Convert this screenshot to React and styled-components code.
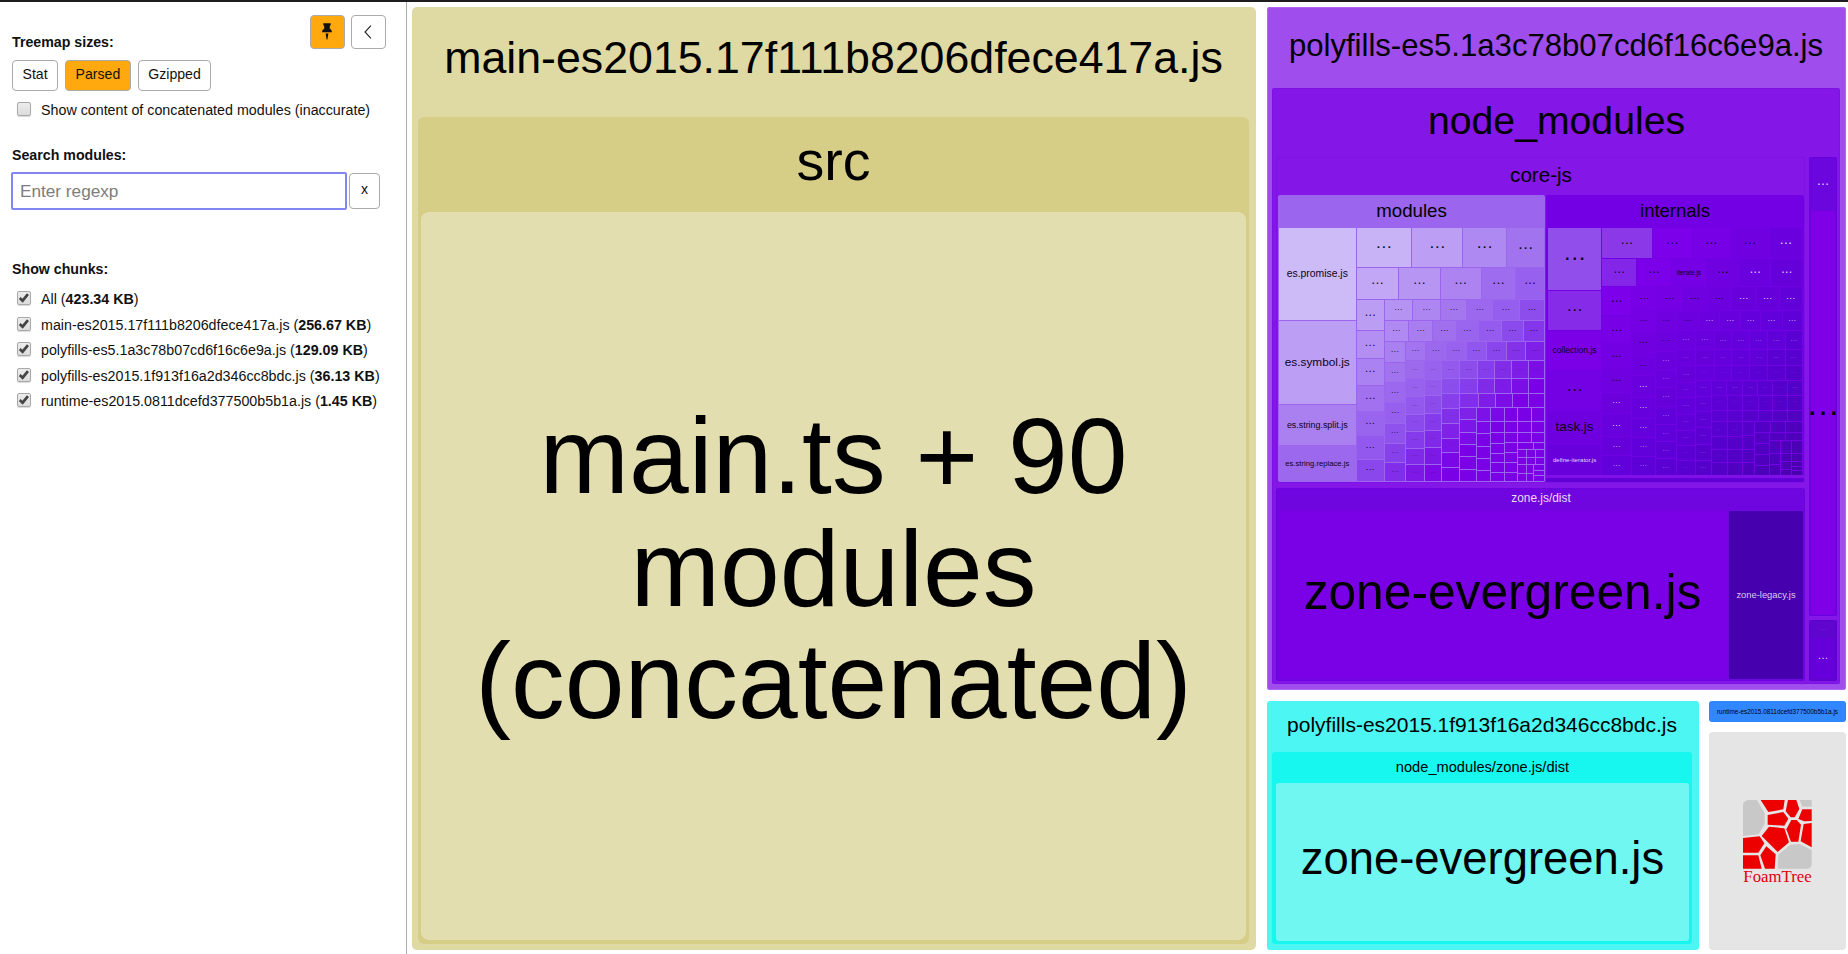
import React from 'react';
import styled, { createGlobalStyle } from 'styled-components';

const GlobalStyle = createGlobalStyle`
  * { box-sizing: border-box; }
  body { margin: 0; background: #fff; color: #111; font: 14.27px "Liberation Sans", Arial, sans-serif; overflow: hidden; }
`;

/* ---------- page shell ---------- */

const Page = styled.div`
  display: flex;
  width: 1848px;
  height: 954px;
  border-top: 2px solid #1e1c1e;
`;

const Sidebar = styled.aside`
  flex: none;
  width: 407px;
  border-right: 1px solid #aaa;
  padding: 13px 20px 0 12px;
`;

const SidebarTop = styled.div`
  display: flex;
  justify-content: space-between;
  height: 45px;
`;

const Heading = styled.h2`
  margin: ${(p) => p.$top || 0}px 0 0;
  font-size: 14.2px;
  line-height: 16px;
  font-weight: bold;
`;

const Actions = styled.div`
  display: flex;
  gap: 6px;
`;

const Button = styled.button`
  border: 1px solid #aaa;
  border-radius: 4px;
  padding: 0 9.5px 3px;
  height: 31px;
  font: 14.1px "Liberation Sans", Arial, sans-serif;
  color: #111;
  background: ${(p) => (p.$active ? '#ffa90f' : '#fff')};
`;

const IconButton = styled(Button)`
  display: flex;
  align-items: center;
  justify-content: center;
  width: 35px;
  height: 34px;
  padding: 0 1px 1px 0;
`;

const SizeSwitch = styled.div`
  display: flex;
  gap: 7px;
`;

const CheckRow = styled.label`
  display: flex;
  align-items: center;
  height: 25.5px;
  padding-left: 5px;
  gap: 10px;
  line-height: 16px;
  white-space: nowrap;
`;

const Box = styled.span`
  display: flex;
  align-items: center;
  justify-content: center;
  width: 14px;
  height: 14px;
  margin-bottom: 2px;
  border: 1px solid #a8a8a8;
  border-radius: 2px;
  background: linear-gradient(#ececec, #dcdcdc);
  box-shadow: 0 1px 1px rgba(0, 0, 0, 0.15);
`;

const SearchRow = styled.div`
  display: flex;
  align-items: center;
  gap: 2px;
  margin: 9px 0 0 -1px;
`;

const SearchInput = styled.input`
  width: 336px;
  height: 38px;
  border: 2px solid #8286f3;
  border-radius: 2px;
  outline: 0;
  padding: 1px 7px 0;
  font: 17.2px "Liberation Sans", Arial, sans-serif;
  &::placeholder { color: #7c7c7c; opacity: 1; }
`;

const ClearButton = styled(Button)`
  width: 31px;
  height: 36px;
  padding: 0 0 3px;
`;

const Options = styled.div`
  margin-top: ${(p) => p.$top}px;
`;

/* ---------- treemap ---------- */

const Treemap = styled.main`
  flex: 1;
  display: flex;
  gap: 10.5px;
  padding: 5px 2px 2px 5px;
`;

const Stack = styled.div`
  display: flex;
  flex-direction: column;
  gap: ${(p) => p.$gap}px;
  width: ${(p) => p.$w}px;
`;

const Line = styled.div`
  display: flex;
  gap: ${(p) => p.$gap || 0}px;
  height: ${(p) => (p.$h ? `${p.$h}px` : 'auto')};
  flex: ${(p) => (p.$h ? 'none' : '1')};
  min-height: 0;
`;

const Group = styled.section`
  display: flex;
  flex-direction: column;
  flex: ${(p) => (p.$w || p.$h ? 'none' : '1')};
  width: ${(p) => (p.$w ? `${p.$w}px` : 'auto')};
  height: ${(p) => (p.$h ? `${p.$h}px` : 'auto')};
  padding: ${(p) => p.$pad || 0};
  border-radius: ${(p) => p.$r ?? 3}px;
  background: ${(p) => p.$bg};
  box-shadow: inset 0 0 0 1px ${(p) => p.$edge || 'transparent'};
`;

const Label = styled.div`
  display: flex;
  align-items: center;
  justify-content: center;
  flex: ${(p) => (p.$h ? 'none' : '1')};
  height: ${(p) => (p.$h ? `${p.$h}px` : 'auto')};
  min-height: 0;
  padding: ${(p) => p.$drop ?? 2}px 0 0.15em;
  font-size: ${(p) => p.$size}px;
  line-height: 1.05;
  text-align: center;
  color: ${(p) => p.$color || '#000'};
  white-space: pre;
`;

const Track = styled.div`
  display: flex;
  flex-direction: ${(p) => p.$dir};
  gap: 1px;
  min-width: 0;
  min-height: 0;
`;

const Cell = styled.div`
  display: flex;
  align-items: center;
  justify-content: center;
  min-width: 0;
  min-height: 0;
  overflow: hidden;
  white-space: nowrap;
`;

const CellText = styled.span`
  line-height: 1;
`;

const Dots = styled.span`
  line-height: 1;
  padding-bottom: 0.52em;
`;

const Ellipsis = ({ size, color, h }) => (
  <Label $h={h} $size={size} $color={color}><Dots>…</Dots></Label>
);

/* A track is {dir, size, kids}; a leaf is {size, name?, font?} or a plain number. */
const row = (size, ...kids) => ({ dir: 'row', size, kids });
const col = (size, ...kids) => ({ dir: 'column', size, kids });
const file = (size, name, font) => ({ size, name, font });

const modulesTree = row(0,
  col(229, file(275, 'es.promise.js', 10.4), file(251, 'es.symbol.js', 11.8), file(119, 'es.string.split.js', 8.9), file(105, 'es.string.replace.js', 7.7)),
  col(561,
    row(117, 164, 149, 129, 110),
    row(91, 125, 121, 120, 100, 83),
    row(542,
      col(82, 91, 80, 77, 76, 70, 67, 63),
      col(476,
        row(60, 81, 82, 75, 75, 76, 73),
        row(60, 70, 70, 67, 66, 65, 63, 61),
        row(416,
          col(60, 60, 57, 58, 59, 56, 54, 55),
          col(413,
            row(56, 59, 58, 58, 58, 57, 55, 55),
            row(358,
              col(54, 49, 51, 51, 47, 48, 47, 47),
              col(47, 52, 47, 49, 49, 48, 48, 48),
              col(53, 50, 43, 42, 42, 41, 41, 41, 40),
              col(250,
                row(50, 50, 48, 48, 47, 46),
                row(43, 50, 48, 48, 47, 46),
                row(38, 50, 47, 47, 45, 44),
                row(221,
                  col(46, 35, 35, 34, 34, 34, 34),
                  col(40, 39, 35, 34, 34, 33, 31),
                  col(39, 38, 32, 29, 27, 25, 25, 25),
                  col(115,
                    row(40, 35, 38, 36),
                    row(32, 35, 38, 36),
                    row(27, 35, 38, 36),
                    row(115,
                      col(35, 28, 27, 26, 26),
                      col(77,
                        row(18, 43, 31),
                        row(22, 23, 23, 24),
                        row(18, 23, 23, 24),
                        row(49, col(23, 25, 22), col(20, 25, 22), col(29, 15, 13, 15)))))))))))),
  ));

const internalsTree = row(0,
  col(159, 186, 114, file(118, 'collection.js', 8.5), 114, file(99, 'task.js', 13.4), file(90, 'define-iterator.js', 6.1)),
  col(598,
    row(90, 150, 117, 113, 113, 98),
    row(81, 102, 102, file(102, 'iterate.js', 6.4), 96, 92, 92),
    row(560,
      col(86, 83, 79, 72, 68, 60, 64, 56, 55),
      col(508,
        row(67, 74, 72, 71, 70, 71, 66, 67),
        row(57, 69, 61, 62, 60, 58, 58, 60, 58),
        row(428,
          col(68, 72, 58, 62, 59, 56, 54, 53),
          col(60, 59, 54, 49, 53, 51, 48, 48, 48),
          col(53, 54, 43, 47, 43, 46, 43, 43, 41, 41),
          col(316,
            row(54, 53, 50, 50, 49, 50, 49),
            row(43, 53, 50, 50, 49, 50, 49),
            row(40, 53, 50, 50, 49, 50, 49),
            row(278,
              col(44, 45, 43, 44, 46, 43, 42),
              col(268,
                row(43, 43, 43, 42, 41, 40, 42),
                row(39, 46, 42, 42, 40, 40, 42),
                row(32, 46, 42, 42, 40, 40, 42),
                row(154,
                  col(46, 41, 34, 36, 34),
                  col(41, 41, 34, 36, 34),
                  col(33, 35, 38, 37, 34),
                  col(138,
                    row(27, 43, 43, 46),
                    row(123,
                      col(40, 30, 30, 27, 27),
                      col(95,
                        row(22, 46, 46),
                        row(97,
                          col(31, 33, 29, 29),
                          col(61,
                            row(33, 29, 29),
                            row(21, 29, 29),
                            row(36, col(29, 18, 14), col(29, 10, 10, 10)))))))))))))),
  ));

const modulesRamp = [
  [0.2, 210, 194, 247], [0.5, 199, 177, 247], [0.65, 190, 161, 245], [0.9, 172, 132, 241],
  [1.05, 158, 108, 238], [1.2, 149, 92, 238], [1.3, 137, 72, 236], [1.4, 129, 45, 233],
  [1.5, 124, 20, 231], [1.6, 122, 0, 230], [2, 122, 0, 230],
];

const internalsRamp = [
  [0.2, 148, 82, 236], [0.38, 139, 56, 232], [0.46, 132, 38, 232], [0.54, 125, 0, 234],
  [0.7, 119, 0, 230], [0.85, 112, 0, 224], [1.05, 104, 0, 220], [1.3, 96, 0, 218],
  [1.6, 84, 0, 202], [2, 72, 0, 172],
];

const shade = (ramp, s) => {
  if (s <= ramp[0][0]) return `rgb(${ramp[0].slice(1).join(',')})`;
  const i = Math.max(1, ramp.findIndex((stop) => stop[0] >= s));
  const a = ramp[i - 1];
  const b = ramp[i];
  const t = Math.min(1, (s - a[0]) / (b[0] - a[0]));
  return `rgb(${[1, 2, 3].map((k) => Math.round(a[k] + (b[k] - a[k]) * t)).join(',')})`;
};

function Mosaic({ node, x = 0, y = 0, w, h, total, ramp, darkFrom }) {
  const shared = { total, ramp, darkFrom };
  const grow = typeof node === 'number' ? node : node.size;
  const basis = { flex: `${grow || 1} 1 0px` };

  if (node.kids) {
    const horizontal = node.dir === 'row';
    const sum = node.kids.reduce((acc, k) => acc + (k.size || k), 0);
    const room = (horizontal ? w : h) - (node.kids.length - 1);
    let offset = 0;
    return (
      <Track $dir={node.dir} style={basis}>
        {node.kids.map((kid, i) => {
          const length = (room * (kid.size || kid)) / sum;
          const at = offset;
          offset += length + 1;
          return horizontal
            ? <Mosaic key={i} node={kid} x={x + at} y={y} w={length} h={h} {...shared} />
            : <Mosaic key={i} node={kid} x={x} y={y + at} w={w} h={length} {...shared} />;
        })}
      </Track>
    );
  }

  const s = (x + w / 2) / total.w + (y + h / 2) / total.h;
  const light = s > darkFrom;
  const min = Math.min(w, h);
  const alpha = Math.max(0.15, Math.min(0.95, (min - 10) / 12));
  const ink = light ? '255,255,255' : '0,0,0';
  return (
    <Cell style={{ ...basis, background: shade(ramp, s) }}>
      {node.name ? (
        <CellText style={{ fontSize: node.font, color: light ? '#e6d5fb' : '#0c0316' }}>{node.name}</CellText>
      ) : (
        min > 9 && <Dots style={{ fontSize: min * 0.44, color: `rgba(${ink},${light ? alpha * 0.9 : alpha})` }}>…</Dots>
      )}
    </Cell>
  );
}

/* ---------- icons ---------- */

const PinIcon = () => (
  <svg width="10" height="17" viewBox="0 0 10 17" fill="#111">
    <path d="M1.3 0.2h7.4v2L7.8 2.7v3.1c1.3.5 2.1 1.5 2.1 3.4H0.1c0-1.9.8-2.9 2.1-3.4V2.7L1.3 2.2z" />
    <path d="M3.6 10.4h2.8L5.4 16.4H4.6z" />
  </svg>
);

const ChevronIcon = () => (
  <svg width="8" height="14" viewBox="0 0 8 14" fill="none" stroke="#222" strokeWidth="1.1">
    <path d="M6.9 0.7L1 7l5.9 6.3" />
  </svg>
);

const CheckIcon = () => (
  <svg width="10" height="10" viewBox="0 0 10 10" fill="none" stroke="#444" strokeWidth="2.7">
    <path d="M0.7 5.1l2.9 2.6L9 1.1" />
  </svg>
);

const FoamLogo = () => (
  <svg width="72" height="86" viewBox="0 0 216 258">
    <g fill="#c8c8c8">
      <path d="M0 14Q2 2 16 0H42L65 40V72L47 103L0 108z" />
      <path d="M170 0h36v20h-28z" />
      <path d="M106 164L142 134L170 132L206 150V194Q204 204 194 206H104z" />
    </g>
    <g fill="#ec0000">
      <path d="M53 0H125L121 28L76 36z" />
      <path d="M135 0H160L169 27L155 52H143L128 34z" />
      <path d="M74 45L121 36L136 56L124 77L74 74z" />
      <path d="M178 28H206V63L184 64L166 57z" />
      <path d="M145 60H161L174 74L166 125H144L130 88z" />
      <path d="M182 72L206 69V142L173 124z" />
      <path d="M78 80L124 85L138 127L104 156L56 108z" />
      <path d="M0 114L50 109L64 130L46 158H0z" />
      <path d="M0 166H46L56 206H0z" />
      <path d="M70 139L98 163L95 206H66L52 166z" />
    </g>
    <text x="1" y="245" fontFamily="Liberation Serif, serif" fontSize="50" textLength="205" lengthAdjust="spacingAndGlyphs" fill="#e3000b">FoamTree</text>
  </svg>
);

const LogoArea = styled.div`
  display: flex;
  flex: 1;
  align-items: center;
  justify-content: center;
  padding: 3px 0 0 3px;
`;

/* ---------- sidebar data ---------- */

const chunks = [
  ['All', '423.34 KB'],
  ['main-es2015.17f111b8206dfece417a.js', '256.67 KB'],
  ['polyfills-es5.1a3c78b07cd6f16c6e9a.js', '129.09 KB'],
  ['polyfills-es2015.1f913f16a2d346cc8bdc.js', '36.13 KB'],
  ['runtime-es2015.0811dcefd377500b5b1a.js', '1.45 KB'],
];

const purpleEdge = 'rgba(90,0,220,0.22)';

export default function App() {
  return (
    <Page>
      <GlobalStyle />
      <Sidebar>
        <SidebarTop>
          <Heading $top={19}>Treemap sizes:</Heading>
          <Actions>
            <IconButton $active><PinIcon /></IconButton>
            <IconButton><ChevronIcon /></IconButton>
          </Actions>
        </SidebarTop>
        <SizeSwitch>
          <Button>Stat</Button>
          <Button $active>Parsed</Button>
          <Button>Gzipped</Button>
        </SizeSwitch>
        <Options $top={6}>
          <CheckRow><Box /><span>Show content of concatenated modules (inaccurate)</span></CheckRow>
        </Options>
        <Heading $top={24}>Search modules:</Heading>
        <SearchRow>
          <SearchInput placeholder="Enter regexp" />
          <ClearButton>x</ClearButton>
        </SearchRow>
        <Heading $top={51}>Show chunks:</Heading>
        <Options $top={10}>
          {chunks.map(([name, size]) => (
            <CheckRow key={name}>
              <Box><CheckIcon /></Box>
              <span>{name} (<b>{size}</b>)</span>
            </CheckRow>
          ))}
        </Options>
      </Sidebar>

      <Treemap>
        <Group $w={844} $h={943} $bg="#dfd9a3" $r={5} $pad="0 7px 6px 6px">
          <Label $h={110} $size={44.7} $drop={0}>main-es2015.17f111b8206dfece417a.js</Label>
          <Group $bg="#d6cd87" $r={6} $pad="0 3px 4px 3px">
            <Label $h={95} $size={55.5}>src</Label>
            <Group $bg="#e2deb0" $r={8}>
              <Label $size={107.4}>{'main.ts + 90\nmodules\n(concatenated)'}</Label>
            </Group>
          </Group>
        </Group>

        <Stack $w={579.5} $gap={11}>
          <Group $h={683} $bg="#a04dee" $edge="#b067f2" $pad="0 6px 6px 5.5px">
            <Label $h={81} $size={31.1}>polyfills-es5.1a3c78b07cd6f16c6e9a.js</Label>
            <Group $bg="#8417e7" $edge={purpleEdge} $r={2} $pad="0 3px 3px 4px">
              <Label $h={69} $size={39.2}>node_modules</Label>
              <Line $gap={4}>
                <Stack $w={529} $gap={5}>
                  <Group $h={326} $bg="#8417e7" $edge="rgba(110,0,225,.25)" $pad="0 1px 1px 2px">
                    <Label $h={38} $size={20.6} $drop={0}>core-js</Label>
                    <Line $gap={1}>
                      <Group $w={267} $bg="#9c65ed" $r={2} $pad="0 1px 1px 1px">
                        <Label $h={33} $size={18.7}>modules</Label>
                        <Line $h={253}>
                          <Mosaic node={modulesTree} w={265} h={253} total={{ w: 265, h: 253 }} ramp={modulesRamp} darkFrom={9} />
                        </Line>
                      </Group>
                      <Group $w={258} $bg="#7300e4" $r={2}>
                        <Group $h={280} $bg="transparent" $pad="0 2px 0 2px">
                          <Label $h={33} $size={18.5}>internals</Label>
                          <Line $h={247}>
                            <Mosaic node={internalsTree} w={254} h={247} total={{ w: 254, h: 247 }} ramp={internalsRamp} darkFrom={0.97} />
                          </Line>
                        </Group>
                        <Group $h={3} $bg="#8010e7" $r={0} />
                        <Group $bg="#6200d8" $r={1} />
                      </Group>
                    </Line>
                  </Group>
                  <Group $bg="#7006df" $edge={purpleEdge} $pad="0 2px 2px 3px">
                    <Label $h={23} $size={11.9} $color="#eadcfb" $drop={0}>zone.js/dist</Label>
                    <Line $gap={1}>
                      <Group $bg="#7a00e5" $r={1} $pad="0 2px 0 0">
                        <Label $size={49.7}>zone-evergreen.js</Label>
                      </Group>
                      <Group $w={74} $bg="#4600ad" $r={1}>
                        <Label $size={9.4} $color="#dccdf0">zone-legacy.js</Label>
                      </Group>
                    </Line>
                  </Group>
                </Stack>
                <Stack $w={28} $gap={4}>
                  <Group $h={459} $bg="#6b06de" $edge={purpleEdge} $r={2} $pad="0 2px 1px 2px">
                    <Ellipsis h={54} size={13} color="#e4d2fa" />
                    <Group $bg="#7f00e7" $r={1}>
                      <Ellipsis size={34} />
                    </Group>
                  </Group>
                  <Group $bg="#5e05ce" $edge={purpleEdge} $r={2} $pad="0 2px 2px 2px">
                    <Ellipsis h={18} size={7} color="#9a2bd8" />
                    <Group $bg="#6600da" $r={1}>
                      <Ellipsis size={11} color="#e4d2fa" />
                    </Group>
                  </Group>
                </Stack>
              </Line>
            </Group>
          </Group>

          <Line $h={249} $gap={10}>
            <Group $w={432.5} $bg="#4cf7f3" $pad="0 7px 6px 5.5px">
              <Label $h={51} $size={21} $drop={0}>polyfills-es2015.1f913f16a2d346cc8bdc.js</Label>
              <Group $bg="#18f6f0" $pad="0 3px 3px 4px">
                <Label $h={31} $size={14.65}>node_modules/zone.js/dist</Label>
                <Group $bg="#70f7f2">
                  <Label $size={45.4} $drop={0}>zone-evergreen.js</Label>
                </Group>
              </Group>
            </Group>
            <Stack $w={137} $gap={10}>
              <Group $h={21} $bg="#3087ff">
                <Label $size={6.4}>runtime-es2015.0811dcefd377500b5b1a.js</Label>
              </Group>
              <Group $bg="#e5e5e5" $r={4}>
                <LogoArea><FoamLogo /></LogoArea>
              </Group>
            </Stack>
          </Line>
        </Stack>
      </Treemap>
    </Page>
  );
}
